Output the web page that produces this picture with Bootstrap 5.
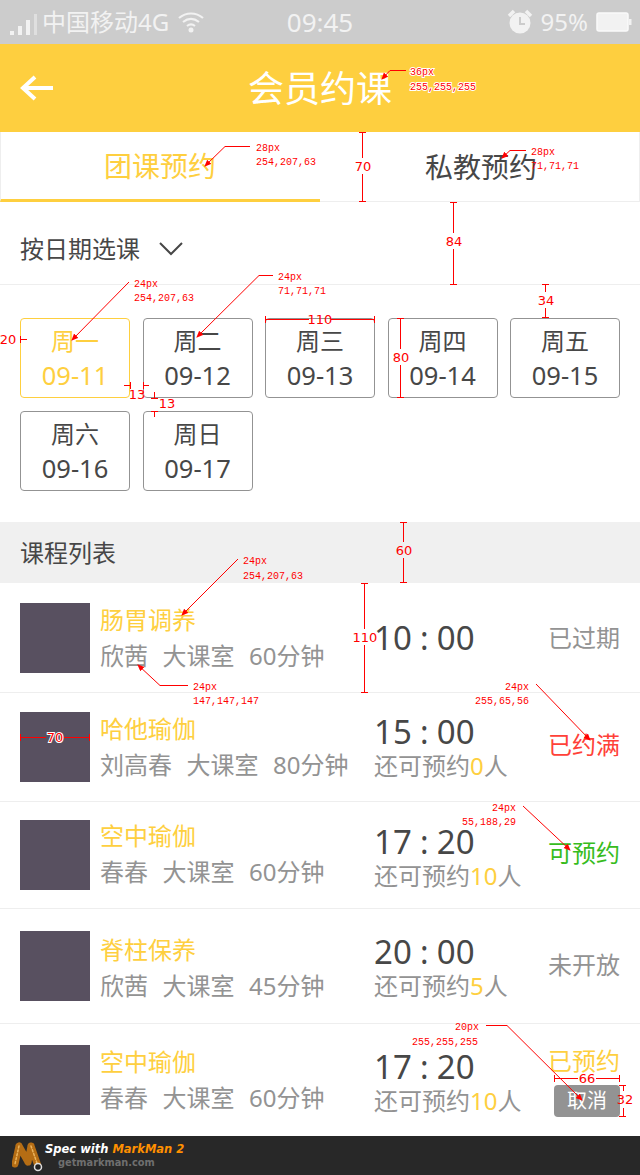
<!DOCTYPE html>
<html lang="zh">
<head>
  <meta charset="UTF-8">
  <title>会员约课</title>
  <link href="https://cdn.jsdelivr.net/npm/bootstrap@5.3.0/dist/css/bootstrap.min.css" rel="stylesheet">
  <style>
    body { width: 640px; height: 1175px; overflow: hidden; color: #474747; background: #fff;
      font-family: "Noto Sans", "Noto Sans CJK SC", sans-serif; }
    .page-wrap { width: 640px; height: 1175px; }
    .status-bar { height: 44px; background: #ccc; color: #f2f2f2; font-size: 24px; }
    .status-side { flex: 1 1 0; }
    .status-time { font-size: 26px; }
    .top-bar { height: 88px; background: #fecf3f; color: #fff; font-size: 36px; padding-top: 1px; }
    .back-arrow { left: 20px; top: 31px; }
    .tab-box { height: 70px; font-size: 28px; border-bottom: 1px solid #eee; }
    .tab-on { color: #fecf3f; border-left: 1px solid #eee; border-bottom: 3px solid #fecf3f; padding-right: 1px; }
    .tab-off { border-right: 1px solid #eee; padding-left: 3px; }
    .filter-bar { height: 83px; font-size: 24px; padding: 12px 0 0 20px; border-bottom: 1px solid #eee; column-gap: 19px; }
    .date-box { padding: 33px 20px 31px; column-gap: 12.5px; row-gap: 13px; }
    .date-item { width: 110px; height: 80px; border: 1px solid #939393; border-radius: 4px; font-size: 24px; line-height: 35px; padding-top: 4px; }
    .date-num { font-size: 25.5px; display: block; }
    .date-on { color: #fecf3f; border-color: #fecf3f; }
    .list-head { height: 61px; background: #f0f0f0; font-size: 24px; padding-left: 20px; }
    .course-row { padding-left: 20px; padding-right: 20px; border-bottom: 1px solid #eee; }
    .row-a { height: 110px; }
    .row-b { height: 109px; }
    .row-c { height: 107px; }
    .row-d { height: 115px; }
    .row-e { height: 112px; border-bottom: 0; }
    .thumb { width: 70px; height: 70px; background: #585060; flex: none; }
    .info-col { width: 284px; padding-left: 10px; font-size: 24px; line-height: 36px; flex: none; }
    .info-meta { column-gap: 14.5px; color: #939393; }
    .time-col { font-size: 24px; line-height: 34px; }
    .time-big { font-size: 33px; line-height: 34px; }
    .time-sep { display: inline-block; width: 25px; text-align: center; font-size: 32px; }
    .sub-gray { color: #939393; }
    .yellow { color: #fecf3f; }
    .status-col { font-size: 24px; line-height: 34px; width: 80px; }
    .state-red { color: #ff4138; }
    .state-green { color: #37bc1d; }
    .cancel-btn { width: 66px; height: 32px; background: #939393; color: #fff; font-size: 20px; line-height: 32px; border-radius: 4px; padding: 0; border: 0; display: block; margin-left: auto; margin-top: 7px; }
    .row-b .time-col { padding-top: 4px; }
    .row-c .time-col { padding-top: 8px; }
    .row-d .time-col { padding-top: 6px; }
    .row-e .time-col { padding-top: 8px; }
    .row-b .status-col, .row-c .status-col { padding-bottom: 4px; }
    .row-d .status-col { padding-bottom: 2px; }
    .row-c .info-col { padding-bottom: 2px; }
    .row-d .info-col { padding-top: 4px; }
    .mark-footer { height: 39px; background: #282828; padding-left: 12px; column-gap: 1px; }
    .mark-title { font: italic bold 11.5px/15px "DejaVu Sans", sans-serif; color: #fff; }
    .mark-title em { color: #ff9000; }
    .mark-site { font: bold 9.8px/12px "DejaVu Sans", sans-serif; color: #6f6f6f; padding-left: 13px; }
    .spec-layer { left: 0; top: 0; pointer-events: none; }
    .spec-layer text { font-family: "Liberation Mono", monospace; font-size: 10px; fill: #f00; }
    .spec-layer .num { font-family: "DejaVu Sans", sans-serif; font-size: 13px; text-anchor: middle; }
    .spec-layer .halo { paint-order: stroke; stroke: #fff; stroke-width: 2px; }
    .spec-layer path { fill: none; stroke: #f00; stroke-width: 1; }
    .spec-layer .lead { marker-end: url(#spec-tip); }
  </style>
</head>
<body>
<div class="page-wrap position-relative">

  <div class="status-bar d-flex align-items-center">
    <div class="status-side d-flex align-items-center ps-2">
      <svg width="30" height="30" viewBox="0 0 30 30" fill="#f2f2f2"><rect x="2" y="24" width="4" height="4"/><rect x="10" y="19" width="4" height="9"/><rect x="18" y="13" width="4" height="15"/><rect x="26" y="7" width="3" height="21" opacity=".5"/></svg>
      <span class="ms-1">中国移动4G</span>
      <svg class="ms-2" width="28" height="26" viewBox="0 0 28 26" fill="none" stroke="#f2f2f2" stroke-width="2.2"><path d="M2 9c7-6 17-6 24 0M6 13c5-4 11-4 16 0M10 17c2.500-2 5.500-2 8 0"/><circle cx="14" cy="21" r="2.500" fill="#f2f2f2" stroke="none"/></svg>
    </div>
    <span class="status-time">09:45</span>
    <div class="status-side d-flex align-items-center justify-content-end pe-2">
      <svg width="26" height="28" viewBox="0 0 26 28"><circle cx="13" cy="15" r="10.500" fill="#f2f2f2"/><path d="M13 9v7h5" fill="none" stroke="#ccc" stroke-width="2"/><path d="M2 8l5-5M24 8l-5-5" stroke="#f2f2f2" stroke-width="3.500"/></svg>
      <span class="ms-2">95%</span>
      <svg class="ms-2" width="36" height="24" viewBox="0 0 36 24"><rect x="1" y="3" width="31" height="18" rx="2" fill="#f2f2f2" stroke="#fafafa" stroke-width="1.500"/><rect x="33" y="9" width="2.500" height="6" fill="#f2f2f2"/></svg>
    </div>
  </div>

  <div class="top-bar d-flex align-items-center justify-content-center position-relative">
    <svg class="position-absolute back-arrow" width="34" height="26" viewBox="0 0 34 26" fill="none" stroke="#fff" stroke-width="4"><path d="M33 13H4M15 2L3 13l12 11"/></svg>
    会员约课
  </div>

  <div class="row g-0">
    <div class="col-6 tab-box tab-on d-flex align-items-center justify-content-center">团课预约</div>
    <div class="col-6 tab-box tab-off d-flex align-items-center justify-content-center">私教预约</div>
  </div>

  <div class="filter-bar d-flex align-items-center">
    按日期选课
    <svg width="24" height="14" viewBox="0 0 24 14" fill="none" stroke="#474747" stroke-width="2"><path d="M1 1l11 11L23 1"/></svg>
  </div>

  <div class="date-box d-flex flex-wrap">
    <div class="date-item date-on text-center">周一<span class="date-num">09-11</span></div>
    <div class="date-item text-center">周二<span class="date-num">09-12</span></div>
    <div class="date-item text-center">周三<span class="date-num">09-13</span></div>
    <div class="date-item text-center">周四<span class="date-num">09-14</span></div>
    <div class="date-item text-center">周五<span class="date-num">09-15</span></div>
    <div class="date-item text-center">周六<span class="date-num">09-16</span></div>
    <div class="date-item text-center">周日<span class="date-num">09-17</span></div>
  </div>

  <div class="list-head d-flex align-items-center">课程列表</div>

  <div class="course-row row-a d-flex align-items-center">
    <div class="thumb"></div>
    <div class="info-col"><div class="yellow">肠胃调养</div><div class="info-meta d-flex"><span>欣茜</span><span>大课室</span><span>60分钟</span></div></div>
    <div class="time-col"><div class="time-big">10<span class="time-sep">:</span>00</div></div>
    <div class="status-col ms-auto text-end sub-gray">已过期</div>
  </div>
  <div class="course-row row-b d-flex align-items-center">
    <div class="thumb"></div>
    <div class="info-col"><div class="yellow">哈他瑜伽</div><div class="info-meta d-flex"><span>刘高春</span><span>大课室</span><span>80分钟</span></div></div>
    <div class="time-col"><div class="time-big">15<span class="time-sep">:</span>00</div><div class="sub-gray">还可预约<span class="yellow">0</span>人</div></div>
    <div class="status-col ms-auto text-end state-red">已约满</div>
  </div>
  <div class="course-row row-c d-flex align-items-center">
    <div class="thumb"></div>
    <div class="info-col"><div class="yellow">空中瑜伽</div><div class="info-meta d-flex"><span>春春</span><span>大课室</span><span>60分钟</span></div></div>
    <div class="time-col"><div class="time-big">17<span class="time-sep">:</span>20</div><div class="sub-gray">还可预约<span class="yellow">10</span>人</div></div>
    <div class="status-col ms-auto text-end state-green">可预约</div>
  </div>
  <div class="course-row row-d d-flex align-items-center">
    <div class="thumb"></div>
    <div class="info-col"><div class="yellow">脊柱保养</div><div class="info-meta d-flex"><span>欣茜</span><span>大课室</span><span>45分钟</span></div></div>
    <div class="time-col"><div class="time-big">20<span class="time-sep">:</span>00</div><div class="sub-gray">还可预约<span class="yellow">5</span>人</div></div>
    <div class="status-col ms-auto text-end sub-gray">未开放</div>
  </div>
  <div class="course-row row-e d-flex align-items-center">
    <div class="thumb"></div>
    <div class="info-col"><div class="yellow">空中瑜伽</div><div class="info-meta d-flex"><span>春春</span><span>大课室</span><span>60分钟</span></div></div>
    <div class="time-col"><div class="time-big">17<span class="time-sep">:</span>20</div><div class="sub-gray">还可预约<span class="yellow">10</span>人</div></div>
    <div class="status-col ms-auto text-end">
      <div class="yellow">已预约</div>
      <button class="cancel-btn">取消</button>
    </div>
  </div>

  <div class="mark-footer d-flex align-items-center">
    <svg width="32" height="36" viewBox="0 0 32 36" fill="none" stroke-linecap="round"><path d="M7 8L3 26M7 8l9 16M19 8l-3 16M19 8l7 20" stroke="#b56d14" stroke-width="7"/><path d="M7 8L3 26M19 8l7 20" stroke="#eab35c" stroke-width="1.500" stroke-dasharray="2 2"/><circle cx="26" cy="29" r="3.500" fill="#222" stroke="#ddd" stroke-width="1.500"/></svg>
    <div>
      <div class="mark-title">Spec with <em>MarkMan 2</em></div>
      <div class="mark-site">getmarkman.com</div>
    </div>
  </div>

  <!-- markman annotations -->
  <svg class="spec-layer position-absolute" width="640" height="1175" viewBox="0 0 640 1175">
    <defs><marker id="spec-tip" markerUnits="userSpaceOnUse" markerWidth="8" markerHeight="8" refX="6" refY="3" orient="auto"><polygon points="0,0 7,3 0,6" fill="#f00"/></marker></defs>
    <path class="lead" d="M406 70.500H390L382 79"/>
    <text class="halo" x="410" y="75">36px</text><text class="halo" x="410" y="90">255,255,255</text>
    <path class="lead" d="M250 146.500H225L205 166"/>
    <text x="256" y="151">28px</text><text x="256" y="165">254,207,63</text>
    <path class="lead" d="M526 150.500H510L502 158"/>
    <text x="531" y="155">28px</text><text x="531" y="169">71,71,71</text>
    <path d="M362.500 132V158M362.500 174V202M359 132.500H366M359 201.500H366"/>
    <text class="num" x="363" y="171">70</text>
    <path d="M453.500 202V233M453.500 249V284M450 202.500H457M450 284.500H457"/>
    <text class="num" x="454" y="246">84</text>
    <path d="M545.500 284V292M545.500 308V318M542 284.500H549M542 317.500H549"/>
    <text class="num" x="546" y="305">34</text>
    <path class="lead" d="M129 282L72 340"/>
    <text x="134" y="287">24px</text><text x="134" y="301">254,207,63</text>
    <path class="lead" d="M273 275.500H259L197 337"/>
    <text x="278" y="280">24px</text><text x="278" y="294">71,71,71</text>
    <path d="M265.500 316V323M374.500 316V323M265 319.500H309M331 319.500H374"/>
    <text class="num" x="320" y="324">110</text>
    <path d="M400.500 318V349M400.500 365V398M397 318.500H404M397 397.500H404"/>
    <text class="num" x="401" y="362">80</text>
    <path d="M20.500 336V343M20 339.500H27"/>
    <text class="num" x="8" y="344">20</text>
    <path d="M130.500 382V389M143.500 382V389M124 385.500H130M143 385.500H149"/>
    <text class="num" x="137" y="399">13</text>
    <path d="M151 398.500H158M151 411.500H158M154.500 398V392M154.500 411V417"/>
    <text class="num" x="167" y="408">13</text>
    <path d="M403.500 522V542M403.500 558V582M400 522.500H407M400 582.500H407"/>
    <text class="num" x="404" y="555">60</text>
    <path d="M364.500 583V629M364.500 645V692M361 583.500H368M361 692.500H368"/>
    <text class="num" x="365" y="642">110</text>
    <path class="lead" d="M238 559L182 615"/>
    <text x="243" y="564">24px</text><text x="243" y="579">254,207,63</text>
    <path class="lead" d="M188 685.500H160L138 665"/>
    <text x="193" y="690">24px</text><text x="193" y="704">147,147,147</text>
    <path class="lead" d="M536 684L590 740"/>
    <text x="505" y="690">24px</text><text x="475" y="704">255,65,56</text>
    <path d="M20.500 734V741M89.500 734V741M20 737.500H46M64 737.500H90"/>
    <text class="num halo" x="55" y="742">70</text>
    <path class="lead" d="M523 806L570 850"/>
    <text x="492" y="811">24px</text><text x="462" y="825">55,188,29</text>
    <path class="lead" d="M486 1025.500H507L582 1100"/>
    <text x="455" y="1030">20px</text><text x="412" y="1045">255,255,255</text>
    <path d="M554.500 1075V1082M619.500 1075V1082M554 1078.500H578M596 1078.500H620"/>
    <text class="num" x="587" y="1083">66</text>
    <path d="M619 1085.500H626M619 1116.500H626M623.500 1085V1091M623.500 1108V1116"/>
    <text class="num" x="625" y="1104">32</text>
  </svg>
</div>
<script src="https://cdn.jsdelivr.net/npm/bootstrap@5.3.0/dist/js/bootstrap.bundle.min.js"></script>
</body>
</html>
